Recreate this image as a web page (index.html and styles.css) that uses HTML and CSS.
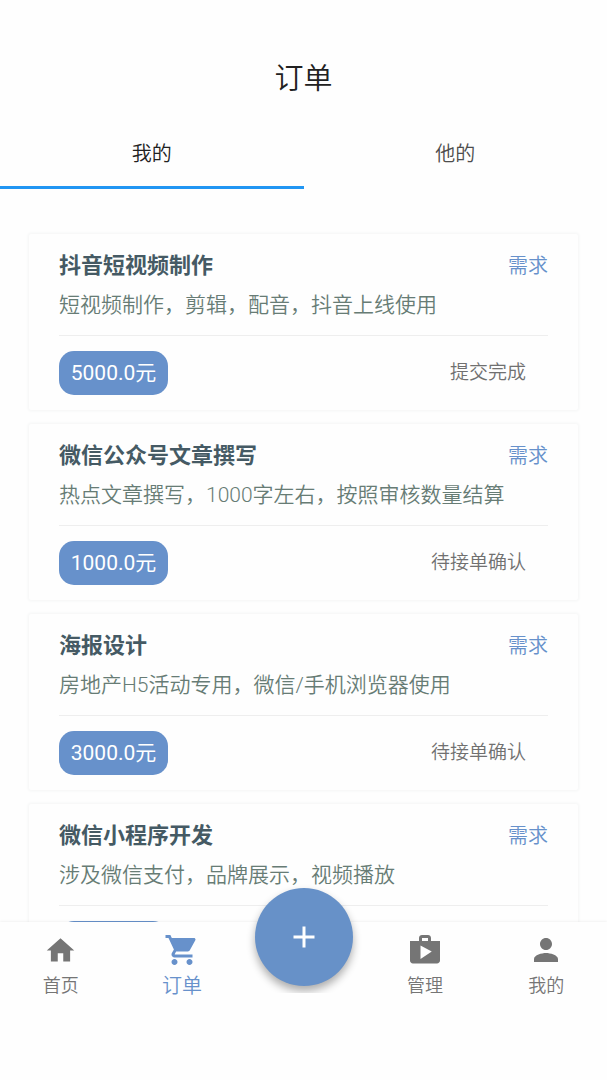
FILE: index.html
```html
<!DOCTYPE html>
<html lang="zh-CN">
<head>
<meta charset="utf-8">
<meta name="viewport" content="width=device-width, initial-scale=1">
<title>订单</title>
<link rel="stylesheet" href="styles.css">
</head>
<body>
<div class="app">
  <header class="header">
    <h1 class="header-title">订单</h1>
    <div class="tabs" role="tablist">
      <button class="tab tab-active" role="tab" aria-selected="true">我的</button>
      <button class="tab" role="tab" aria-selected="false">他的</button>
    </div>
  </header>

  <main class="orders">
    <article class="card">
      <div class="card-head"><h2 class="card-title">抖音短视频制作</h2><span class="card-tag">需求</span></div>
      <p class="card-desc">短视频制作，剪辑，配音，抖音上线使用</p>
      <div class="card-foot"><span class="price">5000.0元</span><span class="status">提交完成</span></div>
    </article>
    <article class="card">
      <div class="card-head"><h2 class="card-title">微信公众号文章撰写</h2><span class="card-tag">需求</span></div>
      <p class="card-desc">热点文章撰写，1000字左右，按照审核数量结算</p>
      <div class="card-foot"><span class="price">1000.0元</span><span class="status">待接单确认</span></div>
    </article>
    <article class="card">
      <div class="card-head"><h2 class="card-title">海报设计</h2><span class="card-tag">需求</span></div>
      <p class="card-desc">房地产H5活动专用，微信/手机浏览器使用</p>
      <div class="card-foot"><span class="price">3000.0元</span><span class="status">待接单确认</span></div>
    </article>
    <article class="card">
      <div class="card-head"><h2 class="card-title">微信小程序开发</h2><span class="card-tag">需求</span></div>
      <p class="card-desc">涉及微信支付，品牌展示，视频播放</p>
      <div class="card-foot"><span class="price"></span></div>
    </article>
  </main>

  <nav class="nav">
    <a class="nav-item" href="#home">
      <span class="nav-icon"><svg class="icon icon-small" viewBox="0 0 24 24" aria-hidden="true"><path d="M10 20v-6h4v6h5v-8h3L12 3 2 12h3v8z"/></svg></span>
      <span class="nav-label">首页</span>
    </a>
    <a class="nav-item nav-active" href="#orders" aria-current="page">
      <span class="nav-icon"><svg class="icon" viewBox="0 0 24 24" aria-hidden="true"><path d="M7 18c-1.100 0-1.990.9-1.990 2S5.900 22 7 22s2-.9 2-2-.9-2-2-2zM1 2v2h2l3.600 7.590-1.350 2.450c-.16.28-.25.61-.25.96 0 1.100.9 2 2 2h12v-2H7.420c-.14 0-.25-.11-.25-.25l.03-.12.900-1.630h7.450c.75 0 1.410-.41 1.750-1.030l3.580-6.490c.08-.14.12-.31.12-.48 0-.55-.45-1-1-1H5.210l-.94-2H1zm16 16c-1.100 0-1.990.9-1.990 2s.89 2 1.990 2 2-.9 2-2-.9-2-2-2z"/></svg></span>
      <span class="nav-label">订单</span>
    </a>
    <div class="nav-center">
      <button class="fab" aria-label="发布">
        <svg class="icon" viewBox="0 0 24 24" aria-hidden="true"><path d="M19 13h-6v6h-2v-6H5v-2h6V5h2v6h6v2z"/></svg>
      </button>
    </div>
    <a class="nav-item" href="#manage">
      <span class="nav-icon"><svg class="icon" viewBox="0 0 24 24" aria-hidden="true"><path d="M16 6V4c0-1.110-.89-2-2-2h-4c-1.110 0-2 .89-2 2v2H2v13c0 1.110.89 2 2 2h16c1.110 0 2-.89 2-2V6h-6zm-6-2h4v2h-4V4zM9 18V9l7.500 4L9 18z"/></svg></span>
      <span class="nav-label">管理</span>
    </a>
    <a class="nav-item" href="#me">
      <span class="nav-icon"><svg class="icon" viewBox="0 0 24 24" aria-hidden="true"><path d="M12 12c2.210 0 4-1.790 4-4s-1.790-4-4-4-4 1.790-4 4 1.790 4 4 4zm0 2c-2.670 0-8 1.340-8 4v2h16v-2c0-2.660-5.330-4-8-4z"/></svg></span>
      <span class="nav-label">我的</span>
    </a>
  </nav>
</div>
</body>
</html>
```
FILE: styles.css
```css
* {
  box-sizing: border-box;
}

body {
  margin: 0;
  background: #fefefe;
  color: #212121;
  font-family: Roboto, "Noto Sans CJK SC", sans-serif;
  font-weight: 350;
}

button {
  border: 0;
  padding: 0;
  background: none;
  font: inherit;
  cursor: pointer;
}

.app {
  display: flex;
  flex-direction: column;
  height: 100vh;
}

/* Header and tabs */
.header {
  flex: none;
  padding-top: 57px;
}

.header-title {
  margin: 0;
  font-size: 29px;
  line-height: 44px;
  font-weight: 350;
  text-align: center;
}

.tabs {
  display: flex;
  margin-top: 16px;
}

.tab {
  flex: 1;
  height: 72px;
  padding-top: 2px;
  border-bottom: 3px solid transparent;
  font-size: 20px;
  color: #4d4d4d;
}

.tab-active {
  border-bottom-color: #2196f3;
  color: #212121;
}

/* Order list */
.orders {
  flex: 1;
  min-height: 0;
  overflow: hidden;
  display: flex;
  flex-direction: column;
  gap: 14px;
  padding: 45px 29px 0;
}

.card {
  flex: none;
  padding: 16px 30px 15px;
  border-radius: 2px;
  box-shadow: 0 0 3px 1px #f4f5f5;
}

.card-head {
  display: flex;
  justify-content: space-between;
  align-items: center;
  height: 32px;
}

.card-title {
  margin: 0;
  font-size: 22px;
  line-height: 28px;
  font-weight: 700;
  color: #455a64;
}

.card-tag {
  font-size: 20px;
  line-height: 28px;
  color: #6791cb;
}

.card-desc {
  margin: 0;
  padding: 7px 0 14px;
  border-bottom: 1px solid #eee;
  font-size: 21px;
  line-height: 32px;
  color: #677c75;
}

.card-foot {
  display: flex;
  justify-content: space-between;
  align-items: center;
  padding: 15px 22px 0 0;
}

.price {
  min-width: 109px;
  height: 44px;
  padding: 0 11px;
  border-radius: 15px;
  background: #6791cb;
  color: #fff;
  font-size: 21px;
  font-weight: 400;
  line-height: 44px;
  text-align: center;
}

.status {
  font-size: 19px;
  line-height: 28px;
  color: #707070;
}

/* Bottom navigation */
.nav {
  position: relative;
  flex: none;
  display: flex;
  height: 158px;
  background: #fefefe;
  box-shadow: 0 0 3px rgba(0, 0, 0, 0.09);
}

.nav-item {
  flex: 1;
  display: flex;
  flex-direction: column;
  align-items: center;
  gap: 7px;
  padding-top: 10px;
  color: #757575;
  font-size: 18px;
  text-decoration: none;
}

.nav-active {
  color: #6791cb;
  font-size: 20px;
}

.nav-icon {
  display: flex;
  align-items: center;
  height: 36px;
}

.icon {
  width: 36px;
  height: 36px;
  fill: currentColor;
}

.icon-small {
  width: 33px;
  height: 33px;
}

.nav-label {
  line-height: 22px;
}

.nav-center {
  flex: 1;
  display: flex;
  justify-content: center;
  height: 71px;
  clip-path: inset(-60px -20px 0);
}

.fab {
  display: flex;
  flex: none;
  align-items: center;
  justify-content: center;
  width: 98px;
  height: 98px;
  margin-top: -34px;
  border-radius: 50%;
  background: #6791c8;
  color: #fff;
  box-shadow: 0 5px 9px rgba(0, 0, 0, 0.32);
}
```
